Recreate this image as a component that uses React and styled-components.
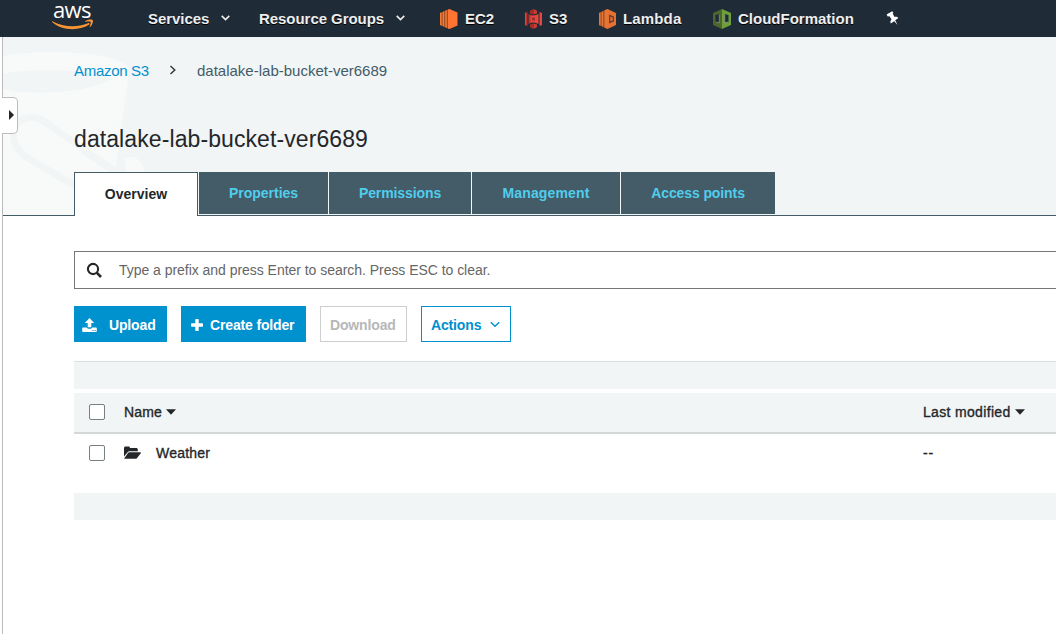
import React from 'react';
import styled, { createGlobalStyle } from 'styled-components';

const GlobalStyle = createGlobalStyle`
  * { box-sizing: border-box; }
  body {
    margin: 0;
    overflow: hidden;
    background: #fff;
    color: #242729;
    font-family: "Liberation Sans", Arial, sans-serif;
    font-size: 14px;
  }
  svg { display: block; flex: none; }
`;

const Page = styled.div`
  height: 634px;
  display: flex;
  flex-direction: column;
`;

const TopBar = styled.header`
  height: 37px;
  background: #1f2b37;
  display: flex;
  align-items: flex-start;
  padding-left: 52px;
  flex: none;
`;

const Logo = styled.div`
  width: 96px;
  height: 37px;
  color: #fff;
`;

const LogoWord = styled.div`
  height: 19px;
  padding-left: 1px;
  font: 500 22px/18px "Open Sans", sans-serif;
  letter-spacing: -0.6px;
`;

const NavItem = styled.div`
  width: ${(p) => p.$width}px;
  height: ${(p) => (p.$service ? 37 : 36)}px;
  display: flex;
  align-items: center;
  color: #eee;
  font-size: 15px;
  font-weight: 700;
  letter-spacing: ${(p) => p.$track || 0}px;
  text-shadow: 0 1px 0 #000;
  white-space: nowrap;

  svg { margin-right: ${(p) => (p.$service ? 7 : 0)}px; }
`;

const NavLabel = styled.span`
  width: ${(p) => (p.$width ? `${p.$width}px` : 'auto')};
`;

const Body = styled.div`
  flex: 1;
  display: flex;
  position: relative;
  padding-left: 2px;
`;

const Content = styled.main`
  flex: 1;
  min-width: 0;
  border-left: 1px solid #bbb;
`;

const DrawerToggle = styled.button`
  position: absolute;
  left: 2px;
  top: 60px;
  width: 16px;
  height: 37px;
  padding: 0 0 2px 6px;
  display: flex;
  align-items: center;
  background: #fff;
  border: 1px solid #bbb;
  border-left: 0;
  border-radius: 0 5px 5px 0;
`;

const Heading = styled.section`
  position: relative;
  height: 179px;
  padding: 21px 0 0 71px;
  background: #f1f5f6;
  border-bottom: 1px solid #435c68;
`;

const Watermark = styled.svg`
  position: absolute;
  left: 0;
  top: 0;
`;

const Breadcrumb = styled.nav`
  position: relative;
  display: flex;
  align-items: center;
  height: 24px;
  font-size: 15px;
`;

const Crumb = styled.span`
  width: ${(p) => p.$width}px;
  color: ${(p) => (p.$link ? '#0091cf' : '#435c68')};
  letter-spacing: ${(p) => p.$track || 0}px;
  white-space: nowrap;
`;

const Separator = styled.span`
  width: 28px;
`;

const Title = styled.h1`
  position: relative;
  height: 30px;
  margin: 43px 0 0;
  font-size: 23px;
  line-height: 29px;
  font-weight: 400;
  letter-spacing: 0.09px;
`;

const Tabs = styled.div`
  position: relative;
  display: flex;
  margin-top: 17px;
  height: 44px;
`;

const Tab = styled.div`
  width: ${(p) => p.$width}px;
  height: ${(p) => (p.$active ? 44 : 42)}px;
  margin-right: 1px;
  padding-bottom: ${(p) => (p.$active ? 1 : 0)}px;
  display: flex;
  align-items: center;
  justify-content: center;
  font-weight: 700;
  letter-spacing: ${(p) => p.$track || 0}px;
  color: ${(p) => (p.$active ? '#242729' : '#50cdec')};
  background: ${(p) => (p.$active ? '#fff' : '#435c68')};
  border: ${(p) => (p.$active ? '1px solid #435c68' : '0')};
  border-bottom: 0;
`;

const Panel = styled.section`
  padding: 35px 0 0 71px;
`;

const SearchBox = styled.div`
  height: 38px;
  display: flex;
  align-items: center;
  padding-left: 11px;
  border: 1px solid #777;
  border-right: 0;
  color: #666;
`;

const SearchHint = styled.span`
  margin-left: 17px;
  letter-spacing: -0.035px;
`;

const Toolbar = styled.div`
  display: flex;
  gap: 14px;
  margin-top: 17px;
`;

const palette = {
  primary: 'background:#0091cf;border-color:#0091cf;color:#fff;',
  disabled: 'background:#fff;border-color:#ccd0d0;color:#b6b8b8;',
  outline: 'background:#fff;border-color:#0091cf;color:#0091cf;',
};

const Button = styled.button`
  width: ${(p) => p.$width}px;
  height: 36px;
  display: flex;
  align-items: center;
  gap: ${(p) => p.$gap || 0}px;
  padding: 1px 0 0 ${(p) => p.$inset}px;
  border: 1px solid;
  font: 700 14px "Liberation Sans", Arial, sans-serif;
  letter-spacing: -0.15px;
  white-space: nowrap;
  ${(p) => palette[p.$kind]}
`;

const Table = styled.div`
  margin-top: 19px;
`;

const Strip = styled.div`
  height: ${(p) => p.$height}px;
  background: #f1f5f6;
  border-top: ${(p) => (p.$line ? '1px solid #dde0e0' : '0')};
`;

const Row = styled.div`
  display: grid;
  grid-template-columns: 35px 799px 1fr;
  align-items: center;
  height: ${(p) => (p.$head ? 41 : 38)}px;
  margin-top: ${(p) => (p.$head ? 4 : 0)}px;
  margin-bottom: ${(p) => (p.$head ? 0 : 21)}px;
  padding: 0 0 ${(p) => (p.$head ? 2 : 0)}px 15px;
  background: ${(p) => (p.$head ? '#f1f5f6' : '#fff')};
  border-bottom: ${(p) => (p.$head ? '2px solid #d5d8d8' : '0')};
`;

const Cell = styled.div`
  display: flex;
  align-items: center;
  gap: ${(p) => p.$gap || 0}px;
  letter-spacing: ${(p) => p.$track || 0}px;
  -webkit-text-stroke: 0.35px #242729;
`;

const Checkbox = styled.span`
  width: 16px;
  height: 16px;
  background: #fff;
  border: 1px solid #777f83;
  border-radius: 2px;
`;

const Chevron = ({ width = 9, height = 6, stroke = '#eee', weight = 1.6 }) => (
  <svg width={width} height={height} viewBox="0 0 9 6" fill="none" stroke={stroke} strokeWidth={weight}>
    <path d="M.7 .9 4.5 4.6 8.3 .9" />
  </svg>
);

const Caret = () => (
  <svg width="10" height="6" viewBox="0 0 10 6" fill="#242729">
    <path d="M0 .3h10L5 5.8z" />
  </svg>
);

const Smile = () => (
  <svg width="42" height="12" viewBox="0 0 42 12" fill="#f79433">
    <path d="M.3 2.200C11.500 8.300 25 8.700 36 4.200c1.200-.5 2.200.8.9 1.600C26.500 12.200 10 11.800.1 3-.3 2.600-.1 2 .3 2.200z" />
    <path d="M33 2.300C35.500.3 39.600.2 40.700 1c.8.8-.2 5-2.400 6.900-.4.300-.9.100-.7-.3.600-1.500 1.500-4 1-4.700-.6-.7-3.600-.3-5.100-.1-.5 0-.8-.2-.5-.5z" />
  </svg>
);

const Ec2Icon = () => (
  <svg width="18" height="20" viewBox="0 0 18 20">
    <path d="M9 0v20L0 16V4z" fill="#9d4f27" />
    <path d="M8 .4 9.500 0 17.500 3.600v12.800L9.500 20 8 19.600z" fill="#ff7333" />
    <path d="M0 4l1.600-.7v13.400L0 16zM2.700 3l1.400-.8v15.600l-1.400-.8zM5.300 1.700l1.500-.7v18l-1.500-.7z" fill="#f27a35" />
  </svg>
);

const S3Icon = () => (
  <svg width="17" height="20" viewBox="0 0 17 20">
    <path d="M0 4 2.500 3v14L0 16zM3.500 5 8.500 7v6l-5 2z" fill="#bc3229" />
    <path d="M0 4l1-.4v12.800L0 16zM17 4l-2.500-1v14l2.500-1zM13.500 5l-5 2v6l5 2z" fill="#e8473d" />
    <path d="M5 1.700 8.500 0v5.500L5 4.500zM5 18.300 8.500 20v-5.500l-3.500 1z" fill="#a82d28" />
    <path d="M12 1.700 8.500 0v5.500l3.500-1zM12 18.300 8.500 20v-5.500l3.500 1z" fill="#c83c35" />
    <path d="M5.500 6.500h6v7h-6z" fill="#e8473d" />
    <path d="M7 8.500h3v3H7z" fill="#9c302c" />
  </svg>
);

const LambdaIcon = () => (
  <svg width="17" height="20" viewBox="0 0 17 20">
    <path d="M8 0v20l-8-4V4z" fill="#9b4c28" />
    <path d="M0 4l1.600-.7v13.400L0 16zM2.700 3l1.500-.8v15.600L2.700 17zM5.500 1.500 9 0v20l-3.500-1.500z" fill="#e57736" />
    <path d="M8.500 0 17 4v12l-8.500 4z" fill="#e7712f" />
    <path d="M10 5.500l5 2v5l-5 2z" fill="#6d4031" />
    <path d="M11.300 7.800l2.400.9v2.600l-2.400.9z" fill="#e7712f" />
  </svg>
);

const CloudFormationIcon = () => (
  <svg width="18" height="20" viewBox="0 0 18 20">
    <path d="M9 0v20l-9-4V4z" fill="#4c662c" />
    <path d="M9 0l9 4v12l-9 4z" fill="#6e9f3a" />
    <path d="M2.500 6 6.500 5v9l-4-.7z" fill="#1f2b37" />
    <path d="M11.500 5l4 1v7.300l-4 .7z" fill="#1f2b37" />
    <path d="M2.800 13 6.300 13.800V5.500" fill="none" stroke="#a9b99a" strokeWidth=".6" />
    <path d="M15.200 13 11.700 13.800V5.500" fill="none" stroke="#b5c8a0" strokeWidth=".6" />
  </svg>
);

const PinIcon = () => (
  <svg width="14" height="15" viewBox="0 0 14 15" fill="#fff">
    <path d="M.6 3.600 6.200.3l1.200 1.500-.7 1 1.900 3.100c1.500-.3 2.900.1 3.800 1.200L9.200 9.200l2.400 4.700-3.400-3.700-3.500 2.200c-.6-1.400-.2-2.900.9-3.900L3.500 5.300l-1.800.1z" />
  </svg>
);

const SearchIcon = () => (
  <svg width="16" height="16" viewBox="0 0 16 16" fill="none" stroke="#242729" strokeWidth="2.100">
    <circle cx="7" cy="7" r="5.100" />
    <path d="M10.700 10.700 15 15" strokeWidth="2.600" />
  </svg>
);

const UploadIcon = () => (
  <svg width="16" height="14" viewBox="0 0 16 14" fill="#fff">
    <path d="M7.500 0l4.700 4.900H9.300V9.300H5.700V4.900H2.800z" />
    <path fillRule="evenodd" d="M1 9.500h3.700c.4 1 1.300 1.300 2.800 1.300s2.400-.3 2.800-1.300H14c.4 0 .8.400.8.800v2.900c0 .4-.4.700-.8.700H1c-.4 0-.8-.3-.8-.7v-2.900c0-.4.400-.8.800-.8zM10.500 12v1h1v-1zM12.700 12v1h1v-1z" />
  </svg>
);

const PlusIcon = () => (
  <svg width="12" height="12" viewBox="0 0 12 12" fill="#fff">
    <path d="M4.300.6c0-.4.300-.6.600-.6h2.200c.4 0 .6.300.6.600v3.700h3.700c.4 0 .6.300.6.600v2.200c0 .4-.3.600-.6.600H7.700v3.700c0 .4-.3.600-.6.600H4.900c-.4 0-.6-.3-.6-.6V7.700H.6C.2 7.700 0 7.400 0 7.100V4.900c0-.4.300-.6.600-.6h3.700z" />
  </svg>
);

const FolderIcon = () => (
  <svg width="17" height="14" viewBox="0 0 17 14" fill="#242729">
    <path d="M0 10.500V2C0 1.100.7.500 1.500.5h3C5.400.5 6 1.200 6 2h6.300c.9 0 1.500.7 1.500 1.500V5.300H6C4.800 5.300 4 5.800 3.200 6.700z" />
    <path d="M5.300 6.300h11c.6 0 .9.400.5.900l-3.700 4.700c-.4.600-1 .9-1.700.9H.9c-.6 0-.8-.4-.4-.9L4 7c.3-.4.800-.7 1.300-.7z" />
  </svg>
);

const Bucket = () => (
  <Watermark width="160" height="178" viewBox="0 0 160 178">
    <path d="M0 19C45 11 125 15 126 34L106 178H0z" fill="#f8fafa" />
    <path d="M0 37C25 31 92 32 108 42 88 56 30 59 0 52z" fill="#f1f5f6" />
    <path d="M112 134 45 87C33 77 17 79 12 91c-5 14 4 26 18 33 20 12 24 15 43 25" fill="none" stroke="#f1f5f6" strokeWidth="7" />
    <path d="M121 122c11-6 20 3 20 14 0 11-9 22-22 29L75 142l35 1c12-1 16-10 11-21z" fill="#f8fafa" />
    <path d="M113 136 80 113" fill="none" stroke="#f1f5f6" strokeWidth="7" />
  </Watermark>
);

export default function App() {
  return (
    <Page>
      <GlobalStyle />
      <TopBar>
        <Logo>
          <LogoWord>aws</LogoWord>
          <Smile />
        </Logo>
        <NavItem $width={111} $track={-0.05}><NavLabel $width={73}>Services</NavLabel><Chevron /></NavItem>
        <NavItem $width={181} $track={-0.05}><NavLabel $width={137}>Resource Groups</NavLabel><Chevron /></NavItem>
        <NavItem $width={85} $service><Ec2Icon /><NavLabel>EC2</NavLabel></NavItem>
        <NavItem $width={74} $service><S3Icon /><NavLabel>S3</NavLabel></NavItem>
        <NavItem $width={114} $service $track={0.15}><LambdaIcon /><NavLabel>Lambda</NavLabel></NavItem>
        <NavItem $width={173} $service><CloudFormationIcon /><NavLabel>CloudFormation</NavLabel></NavItem>
        <NavItem $width={20}><PinIcon /></NavItem>
      </TopBar>
      <Body>
        <Content>
          <Heading>
            <Bucket />
            <Breadcrumb>
              <Crumb $link $width={95} $track={-0.3}>Amazon S3</Crumb>
              <Separator>
                <svg width="8" height="10" viewBox="0 0 8 10" fill="none" stroke="#333" strokeWidth="1.400">
                  <path d="M1.500 1 5.800 5 1.500 9" />
                </svg>
              </Separator>
              <Crumb $width={220}>datalake-lab-bucket-ver6689</Crumb>
            </Breadcrumb>
            <Title>datalake-lab-bucket-ver6689</Title>
            <Tabs>
              <Tab $active $width={124}>Overview</Tab>
              <Tab $width={129}>Properties</Tab>
              <Tab $width={142} $track={-0.1}>Permissions</Tab>
              <Tab $width={148} $track={0.15}>Management</Tab>
              <Tab $width={154} $track={-0.1}>Access points</Tab>
            </Tabs>
          </Heading>
          <Panel>
            <SearchBox>
              <SearchIcon />
              <SearchHint>Type a prefix and press Enter to search. Press ESC to clear.</SearchHint>
            </SearchBox>
            <Toolbar>
              <Button $kind="primary" $width={93} $inset={7} $gap={11}><UploadIcon />Upload</Button>
              <Button $kind="primary" $width={125} $inset={9} $gap={7}><PlusIcon />Create folder</Button>
              <Button $kind="disabled" $width={87} $inset={9}>Download</Button>
              <Button $kind="outline" $width={90} $inset={9} $gap={9}>Actions<Chevron width={10} height={7} stroke="#0091cf" weight={1.3} /></Button>
            </Toolbar>
            <Table>
              <Strip $height={28} $line />
              <Row $head>
                <Checkbox />
                <Cell $gap={4} $track={0.15}>Name<Caret /></Cell>
                <Cell $gap={4} $track={0.33}>Last modified<Caret /></Cell>
              </Row>
              <Row>
                <Checkbox />
                <Cell $gap={15} $track={0.2}><FolderIcon />Weather</Cell>
                <Cell $track={0.9}>--</Cell>
              </Row>
              <Strip $height={27} />
            </Table>
          </Panel>
        </Content>
        <DrawerToggle>
          <svg width="7" height="10" viewBox="0 0 7 10" fill="#242729"><path d="M1 0 6 5 1 10z" /></svg>
        </DrawerToggle>
      </Body>
    </Page>
  );
}
